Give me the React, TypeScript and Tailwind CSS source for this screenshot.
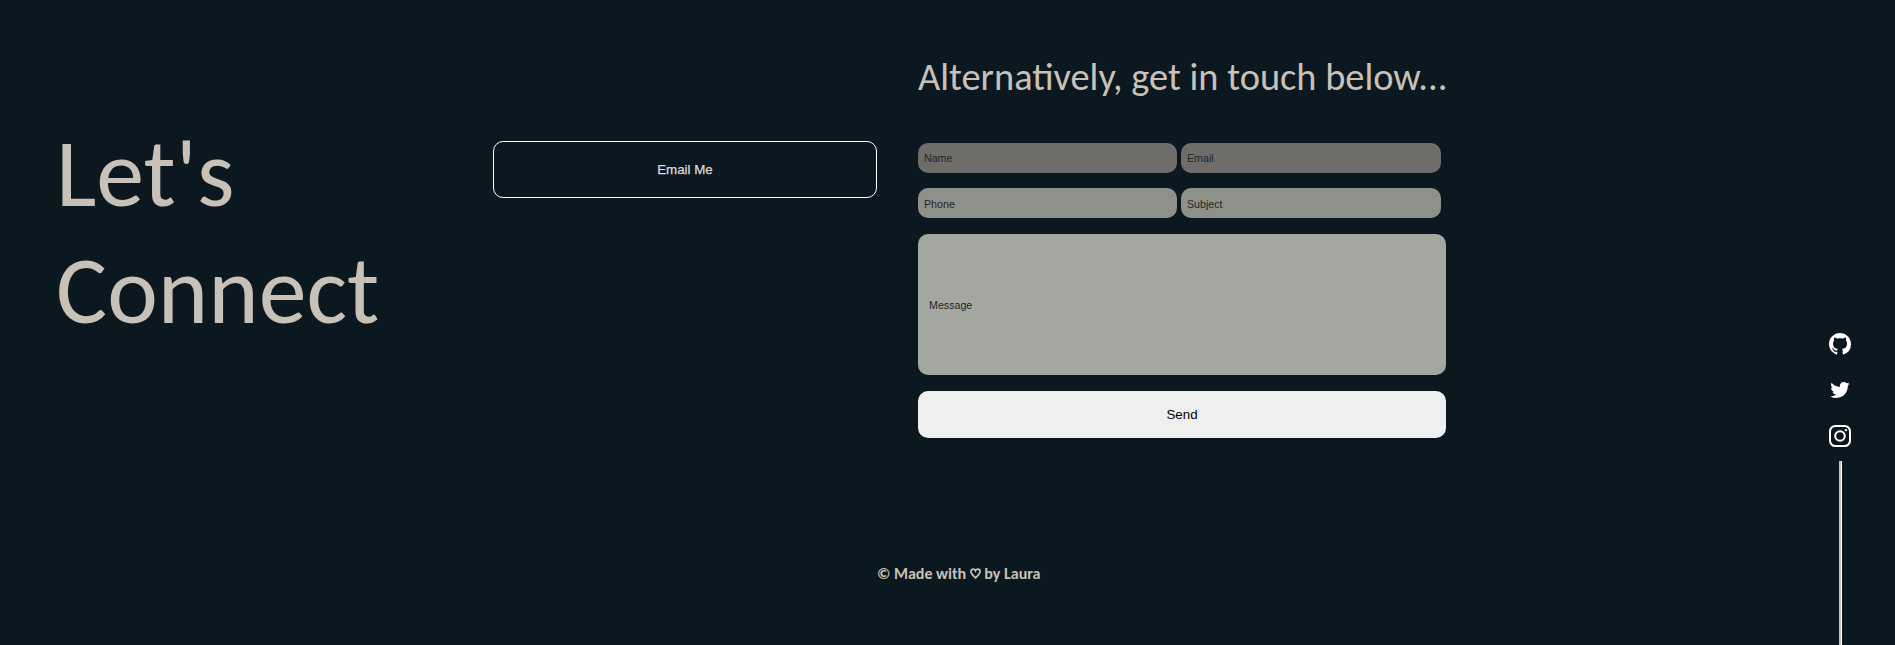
import { BsGithub } from "react-icons/bs";
import { AiOutlineTwitter } from "react-icons/ai";

const fieldBase =
  "h-[30px] rounded-[10px] pl-[6px] text-[10.67px] leading-none text-black placeholder:text-[#232524] outline-none";

function ContactForm() {
  return (
    <form className="mt-[46px] flex w-[528px] flex-col font-['Liberation_Sans',sans-serif]">
      <div className="flex gap-[4px]">
        <input placeholder="Name" className={`${fieldBase} w-[259px] bg-[#6f6d6a] pb-px`} />
        <input placeholder="Email" className={`${fieldBase} w-[260px] bg-[#6f6d6a] pb-px`} />
      </div>
      <div className="mt-[15px] flex gap-[4px]">
        <input placeholder="Phone" className={`${fieldBase} w-[259px] bg-[#8e9189] pt-px`} />
        <input placeholder="Subject" className={`${fieldBase} w-[260px] bg-[#8e9189] pt-px`} />
      </div>
      <input
        placeholder="Message"
        className="mt-4 h-[141px] rounded-[10px] bg-[#a4a6a0] pl-[11px] text-[10.67px] text-black outline-none placeholder:text-[#232524]"
      />
      <button className="mt-4 h-[47px] rounded-[10px] bg-[#efefef] text-[13.33px] text-black">Send</button>
    </form>
  );
}

function InstagramIcon() {
  return (
    <svg viewBox="0 0 22 22" className="mt-[23px] h-[22px] w-[22px] shrink-0" fill="none" stroke="currentColor" strokeWidth="2">
      <rect x="1" y="1" width="20" height="20" rx="5.4" />
      <circle cx="11" cy="11" r="4.8" />
      <circle cx="16.9" cy="5.1" r="1.2" fill="currentColor" stroke="none" />
    </svg>
  );
}

function SocialLinks() {
  return (
    <nav className="mt-[333px] flex w-[22px] flex-col items-center text-white">
      <BsGithub size={22} className="shrink-0" />
      <AiOutlineTwitter size={24} className="mt-[23px] shrink-0" />
      <InstagramIcon />
      <div className="mt-[14px] ml-[1px] h-[184px] w-[3px] shrink-0 border-r border-white bg-[#c5bfb6]" />
    </nav>
  );
}

export default function App() {
  return (
    <div className="flex h-[645px] w-full overflow-hidden bg-[#0b1820] font-['Carlito','Lato',sans-serif] text-[#c8c1b8]">
      <div className="flex w-[1829px] flex-col">
        <main className="flex h-[530px]">
          <h1 className="ml-[56px] mt-[115px] w-[437px] text-[96px] leading-[117px]">
            Let's
            <br />
            Connect
          </h1>
          <button className="mt-[141px] h-[57px] w-[384px] rounded-[10px] border border-white font-['Liberation_Sans',sans-serif] text-[13.33px] text-[#dcdad7] [-webkit-text-stroke:0.25px_#dcdad7]">
            Email Me
          </button>
          <section className="ml-[41px] mt-[53px]">
            <h2 className="h-[44px] whitespace-nowrap text-[38.4px] leading-[47px]">
              Alternatively, get in touch below...
            </h2>
            <ContactForm />
          </section>
        </main>
        <footer className="mt-[34px] ml-[877px] flex items-center whitespace-nowrap text-base font-bold leading-5">
          © Made with&nbsp;
          <svg viewBox="0 0 12 12" className="mb-[2px] h-[11px] w-[11px]" fill="none" stroke="currentColor" strokeWidth="1.9">
            <path d="M6 10.8C3.5 8.4 1 6.3 1 3.9C1 2.3 2.1 1.2 3.5 1.2C4.7 1.2 5.6 2 6 3C6.4 2 7.3 1.2 8.5 1.2C9.9 1.2 11 2.3 11 3.9C11 6.3 8.5 8.4 6 10.8Z" />
          </svg>
          &nbsp;by Laura
        </footer>
      </div>
      <SocialLinks />
    </div>
  );
}
